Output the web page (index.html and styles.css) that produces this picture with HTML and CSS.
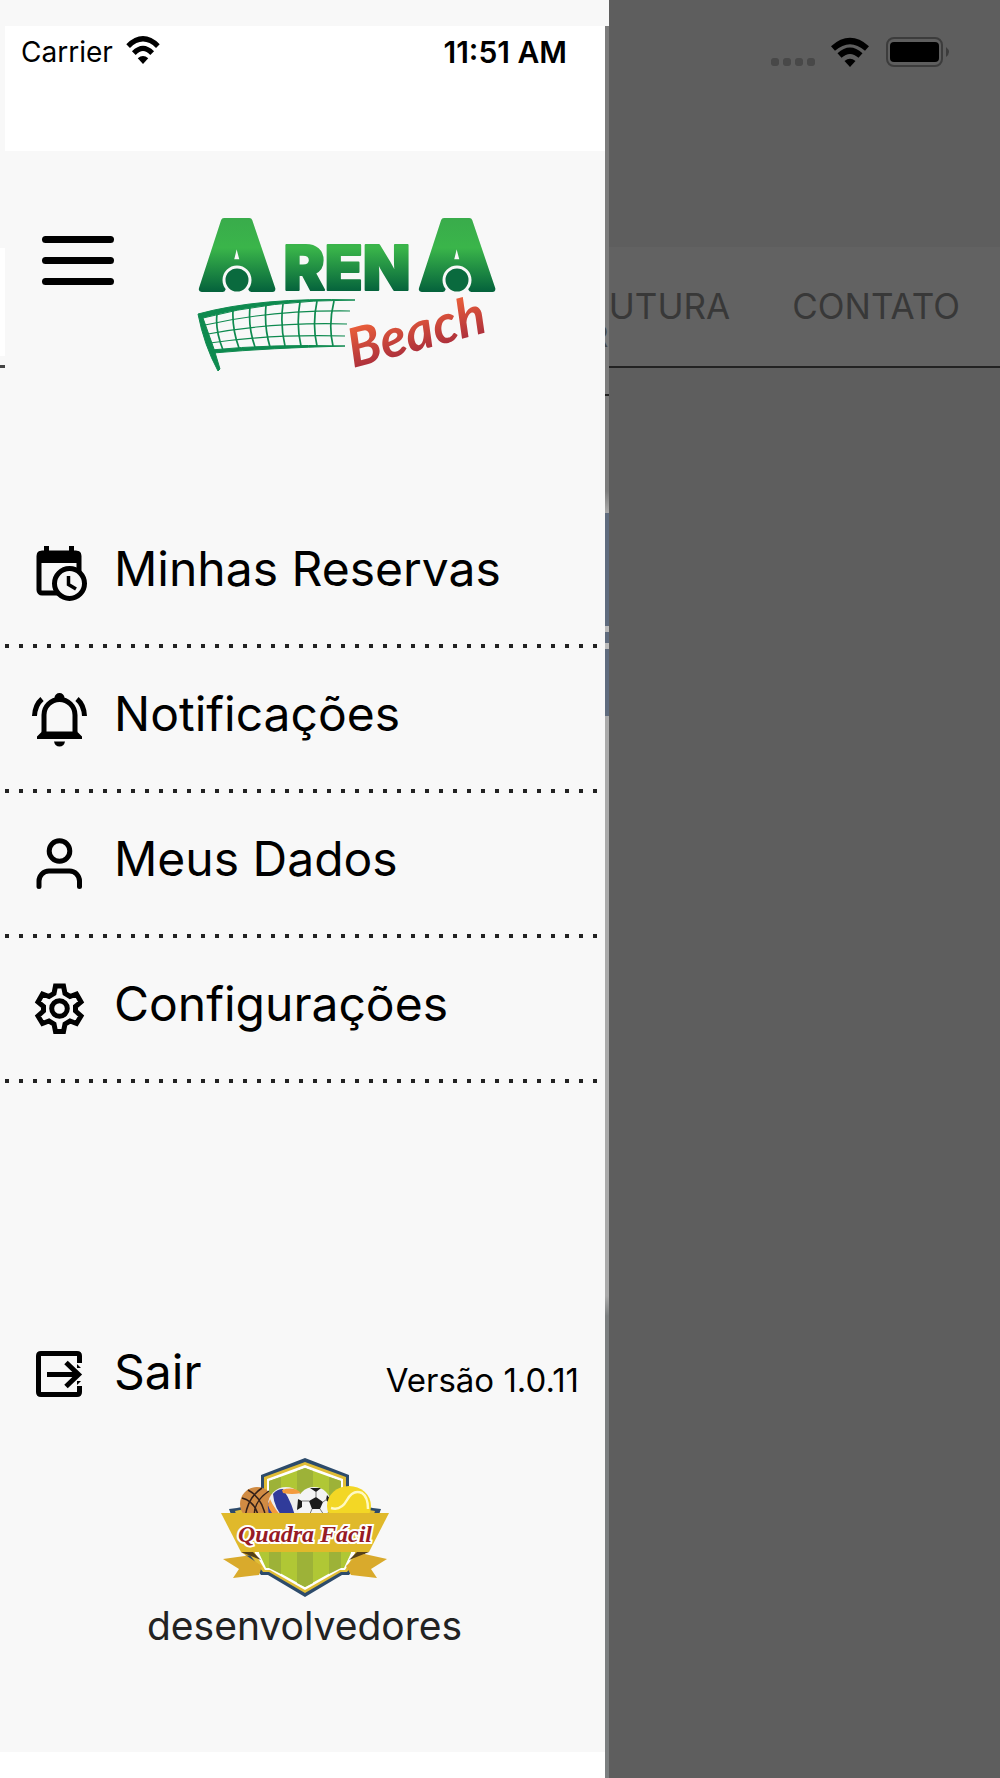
FILE: index.html
```
<!DOCTYPE html>
<html lang="pt-BR">

<head>
    <meta charset="UTF-8">
    <meta name="viewport" content="width=device-width, initial-scale=1.0">
    <title>Arena Beach</title>
    <link rel="stylesheet" href="styles.css">
</head>

<body>
    <main class="page">
        <div class="page-status">
            <div class="signal"><i></i><i></i><i></i><i></i></div>
            <svg class="page-wifi" viewBox="0 0 38 29" aria-hidden="true">
                <path d="M2 10.500Q19 -4.500 36 10.500M8.500 17.500Q19 8 29.500 17.500" fill="none" stroke="#000" stroke-width="6" />
                <path d="M13.500 23Q19 18.500 24.500 23L19 29z" />
            </svg>
            <svg class="battery" viewBox="0 0 64 30" aria-hidden="true">
                <rect x="1" y="1" width="55" height="28" rx="7" fill="none" stroke="#3c3c3c" stroke-width="2" />
                <rect x="4" y="5" width="49" height="20" rx="4" />
                <path d="M60 10q6 5 0 10z" fill="#3c3c3c" />
            </svg>
        </div>
        <nav class="tabs">
            <a href="#estrutura">ESTRUTURA</a>
            <a href="#contato">CONTATO</a>
        </nav>
    </main>

    <aside class="drawer">
        <div class="drawer-top"></div>
        <div class="drawer-main">
            <div class="panel">
                <div class="status">
                    <span>Carrier</span>
                    <svg class="wifi" viewBox="0 0 38 32" aria-hidden="true">
                        <path d="M2 11.500Q19 -5 36 11.500M8.500 19.500Q19 9 29.500 19.500" fill="none" stroke="#000" stroke-width="6" />
                        <path d="M13 25.500Q19 20 25 25.500L19 32z" />
                    </svg>
                    <time>11:51 AM</time>
                </div>

                <header class="header">
                    <span class="behind"></span>
                    <button class="hamburger" type="button" aria-label="Menu"><i></i><i></i><i></i></button>
                    <svg class="logo" viewBox="0 0 320 160" role="img" aria-label="Arena Beach">
                        <defs>
                            <linearGradient id="green" gradientUnits="userSpaceOnUse" x1="0" y1="4" x2="0" y2="76">
                                <stop offset="0" stop-color="#39ac4b" />
                                <stop offset=".4" stop-color="#3ab54a" />
                                <stop offset="1" stop-color="#05633c" />
                            </linearGradient>
                            <linearGradient id="orange" gradientUnits="userSpaceOnUse" x1="0" y1="-46" x2="0" y2="4">
                                <stop offset="0" stop-color="#f2653a" />
                                <stop offset="1" stop-color="#a92d3c" />
                            </linearGradient>
                        </defs>
                        <g class="logo-name" fill="url(#green)" stroke="url(#green)">
                            <text class="logo-big" x="47" y="74" text-anchor="middle">A</text>
                            <text class="logo-small" x="157" y="75" text-anchor="middle">REN</text>
                            <text class="logo-big" x="267" y="74" text-anchor="middle">A</text>
                        </g>
                        <g fill="#0a6a3e" stroke="#f8f8f8" stroke-width="3">
                            <circle cx="47" cy="65" r="13" />
                            <circle cx="267" cy="65" r="13" />
                        </g>
                        <g fill="none" stroke="#0e8a4f">
                            <path d="M8 99Q70 82 165 85Q80 85 13 103L24 134L30 154L28 156Q14 130 8 99z" fill="#0e8a4f" />
                            <path d="M21 135Q80 129 155 131Q80 133 23 138z" fill="#0e8a4f" />
                            <path d="M15 110Q80 95 160 96M18 119Q80 107 157 109M20 128Q80 119 155 121" stroke-width="1.200" />
                            <path d="M27 99Q25 115 33 135M43 95Q42 114 49 133M60 92Q58 112 65 132M76 90Q74 112 80 132M93 89Q90 110 95 131M110 87Q106 110 111 131M127 86Q122 110 127 131M144 86Q138 110 143 131" stroke-width="1.700" />
                        </g>
                        <text class="logo-beach" transform="translate(163 153) rotate(-15)" fill="url(#orange)">Beach</text>
                    </svg>
                </header>

                <nav class="menu">
                    <a class="item" href="#reservas">
                        <svg class="icon" viewBox="0 0 60 60" aria-hidden="true">
                            <rect x="10" y="12" width="40" height="40" rx="3" fill="none" stroke="#000" stroke-width="5" />
                            <path d="M12 10h36q4 0 4 4v8h-44v-8q0-4 4-4zM15 5h5v7h-5zM40 5h5v7h-5z" />
                            <circle cx="40.500" cy="42.500" r="15" fill="#f8f8f8" stroke="#000" stroke-width="5" />
                            <path d="M39.500 35v8.500l7.500 4.500" fill="none" stroke="#000" stroke-width="3.500" />
                        </svg>
                        <span>Minhas Reservas</span>
                    </a>
                    <a class="item" href="#notificacoes">
                        <svg class="icon" viewBox="0 0 60 60" aria-hidden="true">
                            <path d="M15 46V29a15.500 15.500 0 0 1 31 0v17" fill="none" stroke="#000" stroke-width="5" />
                            <path d="M25.500 15v-3a5 5 0 0 1 10 0v3zM13 45.500h35l5 5v2.500h-45v-2.500zM25 55.500h11q-1 5-5.500 5t-5.500-5z" />
                            <path d="M13 13Q6 19 5.500 30M48 13Q55 19 55.500 30" fill="none" stroke="#000" stroke-width="5" />
                        </svg>
                        <span>Notificações</span>
                    </a>
                    <a class="item" href="#dados">
                        <svg class="icon" viewBox="0 0 60 60" fill="none" stroke="#000" stroke-width="5" stroke-linecap="round" aria-hidden="true">
                            <circle cx="30.500" cy="20" r="10.300" />
                            <path d="M10 55.500v-5.500a10 10 0 0 1 10-10h20.500a10 10 0 0 1 10 10v5.500" />
                        </svg>
                        <span>Meus Dados</span>
                    </a>
                    <a class="item" href="#configuracoes">
                        <svg class="icon" viewBox="0 0 60 60" fill="none" stroke="#000" stroke-width="5" aria-hidden="true">
                            <path d="M26.500 10h8l1.500 7.500l5 3l6.500-2.500l4.500 8l-5.500 4.500v4.500l5.500 5l-4.500 7.500l-6.500-2.500l-5 3l-1.500 7.500h-8l-1.500-7.500l-5-3l-6.500 2.500l-4.500-7.500l5.500-5v-4.500l-5.500-4.500l4.500-8l6.500 2.500l5-3z" />
                            <circle cx="30.500" cy="32.500" r="7.800" />
                        </svg>
                        <span>Configurações</span>
                    </a>
                </nav>

                <div class="exit">
                    <a class="item-exit" href="#sair">
                        <svg class="icon" viewBox="0 0 60 60" fill="none" stroke="#000" stroke-width="5" aria-hidden="true">
                            <path d="M50.500 24V12q0-2.500-2.500-2.500H12q-2.500 0-2.500 2.500v36q0 2.500 2.500 2.500h36q2.500 0 2.500-2.500V37" />
                            <path d="M47 19l7 7v-7zM47 42l7-7v7z" stroke="none" fill="#f8f8f8" />
                            <path d="M18 30.500h31M37 18.500l12.500 12l-12.500 12" />
                        </svg>
                        <span>Sair</span>
                    </a>
                    <span class="version">Versão 1.0.11</span>
                </div>

                <footer class="footer">
                    <svg class="badge" viewBox="20 15 170 143" role="img" aria-label="Quadra Fácil">
                        <g stroke-linejoin="miter">
                            <path d="M105 17L149 34V58Q160 66 181 68L164 115L149 134H142L105 156L68 134H61L46 115L29 68Q50 66 61 58V34z" fill="#2d4b6b" />
                            <path d="M105 21L146 36V60Q160 68 175 70L160 114L147 131H141L105 152L69 131H63L50 114L35 70Q50 68 64 60V36z" fill="#e0bd35" />
                            <path d="M105 24L143 38V62L158 74L155 112L145 129H140L105 149L70 129H65L55 112L52 74L67 62V38z" fill="#fff" />
                            <path d="M105 27L141 40V64L154 78L151 112L144 127H139L105 146L71 127H66L59 112L56 78L69 64V40z" fill="#b0c735" />
                            <path d="M97 30l8-3l8 3V142l-8 4l-8-4zM69 40l12-4V133l-12-6zM129 36l12 4V127l-12 6z" fill="#9db238" />
                        </g>
                        <circle cx="57" cy="63" r="17" fill="#d08b43" />
                        <path d="M42 57Q57 61 59 80M48 49Q63 57 66 78M55 80Q51 62 69 50M45 76Q48 56 62 47" fill="none" stroke="#332018" stroke-width="1.500" />
                        <circle cx="86" cy="64" r="18" fill="#eee" />
                        <path d="M73 53Q77 48 83 48Q93 63 96 80H86Q74 68 73 53zM68 61Q73 74 80 80H72Q67 72 68 61z" fill="#303b9a" />
                        <path d="M82 49Q94 45 101 52Q92 54 83 52zM70 58Q74 68 86 80H80Q70 72 68 64z" fill="#f39a3d" />
                        <circle cx="114" cy="63" r="17" fill="#f4f4f4" />
                        <path d="M109 60l7-4l7 5l-3 7h-8zM110 47h11l-5 4zM98 58l4 2v6l-5 3zM105 74l6 4l-2 3h-6zM124 74l5-3l1 8h-5zM127 54l4 5l-1 4l-4-4z" fill="#1c1c1c" />
                        <path d="M109 60l-7 0M116 56v-5M123 61l4-3M120 68l4 6M112 68l-3 7" stroke="#777" />
                        <ellipse cx="149" cy="65" rx="22" ry="20" fill="#f3d725" />
                        <path d="M131 67Q141 70 147 59T162 52Q168 56 168 68" fill="none" stroke="#fff9c2" stroke-width="2.500" />
                        <path d="M23 118L52 114L50 111H41L62 125L59 134L33 137L39 128zM187 118L160 112L146 125L151 134L177 137L171 128z" fill="#d9aa2c" />
                        <path d="M41 111h12l8 8zM169 111h-12l-8 8z" fill="#54401a" />
                        <path d="M21 72H189L169 111H41z" fill="#e0b92b" />
                        <text class="badge-text" x="105" y="101" text-anchor="middle">Quadra Fácil</text>
                    </svg>
                    <span>desenvolvedores</span>
                </footer>
            </div>
            <div class="edge"><span>R</span></div>
        </div>
    </aside>
</body>

</html>
```
FILE: styles.css
```
* {
    box-sizing: border-box;
}

body {
    margin: 0;
    font-family: Inter, "Liberation Sans", sans-serif;
    color: #000;
    background: #5e5e5e;
}

a {
    color: inherit;
    text-decoration: none;
}

svg {
    overflow: visible;
}

/* page behind the drawer */
.page {
    min-height: 100vh;
    overflow: hidden;
    background: #5e5e5e;
}

.page-status {
    display: flex;
    justify-content: flex-end;
    align-items: flex-end;
    height: 247px;
    padding: 0 50px 180px 0;
}

.signal {
    display: flex;
    gap: 4px;
    margin: 0 16px 1px 0;
}

.signal i {
    width: 8px;
    height: 8px;
    border-radius: 3px;
    background: #484848;
}

.page-wifi {
    width: 38px;
    height: 29px;
    margin-right: 17px;
}

.battery {
    width: 64px;
    height: 30px;
}

.tabs {
    display: flex;
    justify-content: flex-end;
    gap: 62px;
    height: 121px;
    padding: 36px 40px 0 0;
    background: #626262;
    border-bottom: 2px solid #222;
    font-size: 35px;
    line-height: 46px;
    color: #383838;
}

/* drawer */
.drawer {
    position: absolute;
    top: 0;
    left: 0;
    display: flex;
    flex-direction: column;
    width: 60.9%;
    min-height: 100vh;
    background: #f8f8f8;
}

.drawer-top {
    height: 26px;
}

.drawer-main {
    display: flex;
    flex: 1;
}

.panel {
    display: flex;
    flex: 1;
    flex-direction: column;
    min-width: 0;
    border-bottom: 26px solid #fff;
}

.edge {
    width: 4px;
    overflow: hidden;
    padding-top: 292px;
    color: #444;
    font-size: 30px;
    background: linear-gradient(#7c7c7c 368px, #222 368px, #222 370px, #7c7c7c 370px, #7c7c7c 465px, #aaa 487px, #5f6b7d 487px, #5f6b7d 600px, #bbb 600px, #bbb 606px, #5f6b7d 606px, #5f6b7d 617px, #bbb 617px, #bbb 623px, #5f6b7d 623px, #5f6b7d 690px, #aaa 690px, #aaa 1270px, #7c7f80 1290px);
}

/* only the end of the letter is visible in the gap */
.edge span {
    display: block;
    margin-left: -16px;
}

.status {
    display: flex;
    align-items: flex-start;
    height: 125px;
    margin-left: 5px;
    padding: 9px 38px 0 16px;
    background: #fff;
    font-size: 28px;
    line-height: 34px;
}

.wifi {
    width: 36px;
    height: 28px;
    margin: 1px 0 0 12px;
}

.status time {
    margin-left: auto;
    font-size: 30px;
    font-weight: 600;
}

.header {
    position: relative;
    display: flex;
    align-items: flex-start;
    height: 352px;
    padding: 64px 40px 0 42px;
}

/* strip of the page still showing on the left */
.behind {
    position: absolute;
    top: 97px;
    left: 0;
    width: 5px;
    height: 120px;
    background: linear-gradient(#fff 108px, #f8f8f8 108px, #f8f8f8 117px, #444 117px);
}

.hamburger {
    display: flex;
    flex-direction: column;
    gap: 14px;
    width: 72px;
    margin: 21px 0 0;
    padding: 0;
    border: 0;
    background: none;
}

.hamburger i {
    width: 100%;
    height: 7px;
    border-radius: 4px;
    background: #000;
}

.logo {
    width: 320px;
    height: 160px;
    margin-left: 76px;
}

.logo-name {
    font-weight: 900;
    stroke-linejoin: round;
}

.logo-big {
    font-size: 94px;
    stroke-width: 6px;
}

.logo-small {
    font-size: 62px;
    stroke-width: 2px;
}

.logo-beach {
    font-family: Lato, sans-serif;
    font-size: 54px;
    font-style: italic;
    font-weight: 700;
}

.menu {
    background: #f8f8f8;
}

.item {
    display: flex;
    align-items: center;
    height: 145px;
    margin-left: 5px;
    padding: 0 0 10px 24px;
    background: repeating-linear-gradient(90deg, #222 0, #222 4px, transparent 4px, transparent 14px) 0 100% / calc(100% - 8px) 4px no-repeat;
    font-size: 48px;
    line-height: 60px;
}

.item span,
.item-exit span {
    padding-bottom: 4px;
}

.icon {
    flex: none;
    width: 60px;
    height: 60px;
    margin-right: 25px;
}

.exit {
    display: flex;
    align-items: center;
    justify-content: space-between;
    margin-top: 259px;
    padding: 0 26px 0 29px;
}

.item-exit {
    display: flex;
    align-items: center;
    font-size: 48px;
    line-height: 60px;
}

.version {
    padding-top: 12px;
    font-size: 33px;
    line-height: 40px;
}

.footer {
    display: flex;
    flex-direction: column;
    align-items: center;
    margin-top: 50px;
    padding-left: 4px;
    font-size: 39px;
    line-height: 50px;
    color: #222;
}

.badge {
    width: 170px;
    height: 143px;
    margin-bottom: 2px;
}

.badge-text {
    font-family: "Liberation Serif", serif;
    font-size: 24px;
    font-style: italic;
    font-weight: 700;
    fill: #971b25;
    stroke: #fff;
    stroke-width: 4px;
    paint-order: stroke;
}
```
